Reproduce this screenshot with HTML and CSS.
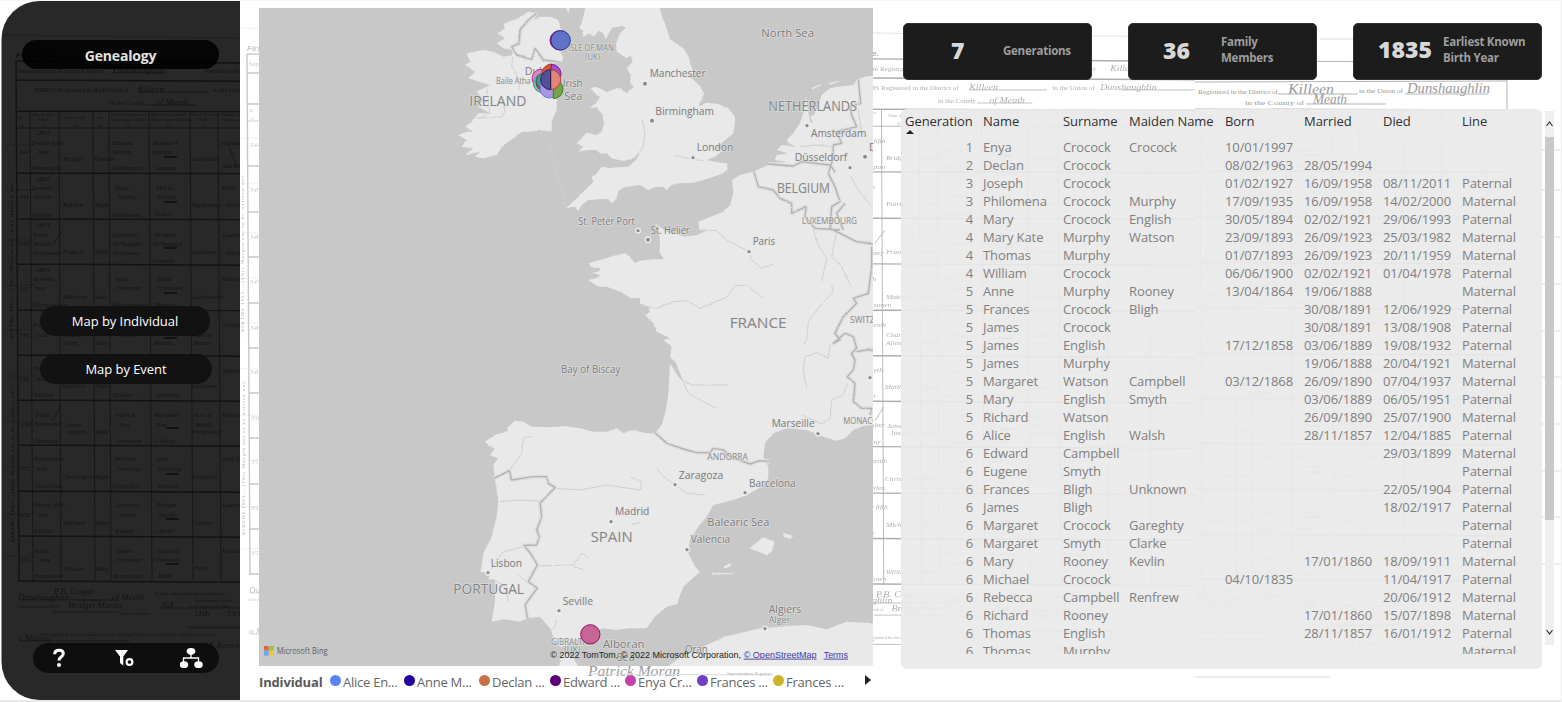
FILE: index.html
```html
<!DOCTYPE html>
<html lang="en">
<head>
<meta charset="utf-8">
<title>Genealogy</title>
<link rel="stylesheet" href="styles.css">
</head>
<body>
<svg class="backdrop" width="1562" height="702" viewBox="0 0 1562 702" aria-hidden="true">
  <defs>
    <clipPath id="clipLeft"><path d="M240 0V702H40A38 38 0 0 1 1 662V40A38 38 0 0 1 40 0Z"/></clipPath>
    <clipPath id="clipMid"><rect x="873" width="322" height="702"/></clipPath>
    <clipPath id="clipRight"><rect x="1195" y="108" width="366" height="594"/></clipPath>
    <clipPath id="clipStrip"><rect x="241" width="18" height="702"/></clipPath>
    <g id="register" fill="currentColor" stroke="none">
      <g stroke="currentColor" fill="none">
        <path stroke-width=".5" opacity=".6" d="M3 35L365 40M5 145H35M5 190H35M5 240H35M5 285H35M5 330H35M5 376H35M5 422H35M5 467H35M5 514H35M5 556H35"/>
        <path stroke-width="1.4" d="M16 61L365 64M16 80L365 82M16 111L365 112M16 173L365 174M16 219L365 220M17 264L365 266M17 310L365 311M18 355L365 357M18 400L365 402M18 445L365 447M18 491L365 493M18 536L365 538M18 581L365 583M16 61L19 581"/>
        <path stroke-width=".8" d="M16 128H365M30 111L33 581M59 111L61 581M93 111L95 581M109 111L111 581M149 111L152 581M190 111L193 581M218 111L221 581M262 112L264 581M300 112L302 581M345 112L347 581"/>
        <path stroke-width=".7" d="M112 73H167M138 92H208M145 105H195M275 92H350M20 600H120M52 612H118M162 608H260M188 627H260M188 628H270M20 641H130M240 642H300"/>
        <path d="M164 157h13M164 202h13M164 248h13M164 293h13M164 338h13M166 383h13M166 428h13M166 474h13M166 519h13M166 564h13" stroke-width="2"/>
        <path d="M53 244L62 231M53 420L61 406M229 145L236 166" stroke-width=".8"/>
      </g>
      <text class="stamp" x="16" y="58">First Page.</text>
      <g class="print">
        <text x="18" y="73">Superintendent Registrar's District</text><text x="205" y="73">Registrar's District</text>
        <text x="35" y="92">BIRTHS Registered in the District of</text><text x="213" y="92">in the Union of</text>
        <text x="110" y="105">in the County</text>
      </g>
      <g class="script heading">
        <text x="113" y="73">Dunshaughlin</text><text x="138" y="92">Killeen</text><text x="156" y="105">of Meath</text><text x="256" y="92">Dunshaughlin</text><text x="265" y="73">Killeen</text>
        <text x="18" y="600">Dunshaughlin</text><text x="54" y="594">P.B. Cogan</text><text x="112" y="600">of Meath</text><text x="68" y="608">Bridget Martin</text><text x="160" y="608">364</text><text x="194" y="616">11th</text><text x="228" y="616">October</text><text x="18" y="641">a Malony</text><text x="205" y="648">M. Kearney</text>
      </g>
      <g class="tiny">
        <text x="18" y="119">No.</text><text x="33" y="116">Date and Place</text><text x="37" y="121">of Birth.</text><text x="65" y="119">Name (if any).</text><text x="97" y="119">Sex.</text><text x="111" y="116">Name and Surname and</text><text x="111" y="121">Dwelling-place of Father.</text><text x="151" y="116">Name and Surname and</text><text x="151" y="121">Maiden Surname of Mother.</text><text x="191" y="116">Rank or Profession</text><text x="196" y="121">of Father.</text><text x="221" y="116">Signature, Qualification,</text><text x="222" y="121">Residence of Informant.</text>
        <text x="19" y="127">(1).</text><text x="41" y="127">(2).</text><text x="73" y="127">(3).</text><text x="97" y="127">(4).</text><text x="126" y="127">(5).</text><text x="166" y="127">(6).</text><text x="201" y="127">(7).</text>
        <text x="155" y="595">Registrar of Births and Deaths in the District of</text><text x="78" y="601">in the County of</text><text x="195" y="602">do hereby certify, that this</text><text x="18" y="608">from the Entry of the Birth of</text><text x="190" y="608">in the Registry of the Births</text><text x="118" y="615">Witness my hand, this</text><text x="40" y="636">I have examined the above, and compared it with the said original Register's Book, and hereby certify that it is a true copy.</text>
      </g>
      <text class="margin" transform="translate(13 339) rotate(-90)" textLength="158">BIRTHS 1863.—(This Margin not to be written on).</text>
      <text class="margin" transform="translate(14 542) rotate(-90)" textLength="155">BIRTHS 1863.—(This Margin not to be written on).</text>
      <g class="script">
        <text x="19" y="154">344</text><text x="36" y="135">1863</text><text x="31" y="145">Twenty fifth</text><text x="37" y="154">June</text><text x="31" y="170">Wilmington</text><text x="63" y="161">Bridget</text><text x="94" y="161">Female</text><text x="112" y="145">Edward</text><text x="112" y="154">Martin</text><text x="112" y="170">Wilmington</text><text x="152" y="145">Margaret</text><text x="152" y="154">Martin</text><text x="154" y="170">Gannon</text><text x="192" y="161">Carpenter</text><text x="220" y="145">Margaret</text><text x="222" y="168">Martin</text>
        <text x="19" y="199">345</text><text x="36" y="181">1863</text><text x="32" y="190">Seventh</text><text x="33" y="199">March</text><text x="32" y="217">Killeen</text><text x="63" y="207">Patrick</text><text x="95" y="207">Male</text><text x="115" y="190">Peter</text><text x="118" y="199">Molloy</text><text x="112" y="217">Kilmessan</text><text x="156" y="190">Maria</text><text x="157" y="199">Molloy</text><text x="155" y="216">Lynch</text><text x="192" y="207">Signalman</text><text x="222" y="190">Peter</text><text x="225" y="207">Molloy</text>
        <text x="19" y="246">346</text><text x="36" y="227">1863</text><text x="33" y="237">South</text><text x="33" y="246">March</text><text x="32" y="255">Mulhussey</text><text x="63" y="254">Francis</text><text x="95" y="254">Male</text><text x="112" y="237">Laurence</text><text x="112" y="246">McTaggart</text><text x="112" y="255">Mulhussey</text><text x="155" y="237">Bridget</text><text x="152" y="246">McTaggart</text><text x="152" y="263">Lawless</text><text x="192" y="254">Labourer</text><text x="222" y="237">Laurence</text><text x="225" y="255">Martin</text>
        <text x="19" y="291">347</text><text x="36" y="272">1863</text><text x="33" y="281">Seventh</text><text x="34" y="290">July</text><text x="32" y="307">Warrenstown</text><text x="63" y="299">Matthew</text><text x="94" y="299">Male</text><text x="114" y="281">John</text><text x="116" y="290">Coleman</text><text x="112" y="307">Warrenstown</text><text x="157" y="281">Eliza</text><text x="158" y="290">Coleman</text><text x="155" y="307">Hughes</text><text x="192" y="299">Landholder</text><text x="221" y="281">Margaret</text>
        <text x="19" y="337">348</text><text x="33" y="327">Fourteenth</text><text x="35" y="337">June</text><text x="63" y="337">Charles</text><text x="63" y="345">Allen</text><text x="95" y="345">Male</text><text x="118" y="327">George</text><text x="118" y="337">Weston</text><text x="154" y="345">Martin</text><text x="193" y="337">Station</text><text x="193" y="345">Master</text><text x="222" y="327">George</text>
        <text x="19" y="381">349</text><text x="34" y="371">Twentieth</text><text x="36" y="381">June</text><text x="34" y="397">Killeen</text><text x="62" y="388">Matthew</text><text x="95" y="388">Male</text><text x="118" y="373">James</text><text x="113" y="397">Killeen</text><text x="156" y="397">Glennon</text><text x="192" y="388">Labourer</text><text x="223" y="373">Mathew</text>
        <text x="20" y="427">350</text><text x="34" y="417">Tenth</text><text x="34" y="426">November</text><text x="34" y="443">Dunsany</text><text x="64" y="427">James</text><text x="67" y="434">Joseph</text><text x="95" y="434">Male</text><text x="115" y="417">Patrick</text><text x="119" y="427">Fox</text><text x="117" y="443">Dunsany</text><text x="154" y="417">Margaret</text><text x="156" y="427">Fox</text><text x="155" y="443">Collins</text><text x="194" y="417">Son of</text><text x="196" y="427">Hotel</text><text x="192" y="434">Proprietor</text><text x="222" y="417">Patrick</text>
        <text x="20" y="471">351</text><text x="34" y="461">Fourteenth</text><text x="36" y="471">July</text><text x="34" y="488">Culmullen</text><text x="62" y="479">Christopher</text><text x="95" y="479">Male</text><text x="115" y="461">William</text><text x="117" y="471">Dowling</text><text x="112" y="488">Culmullen</text><text x="155" y="461">Jane</text><text x="158" y="471">Dowling</text><text x="158" y="488">Bennett</text><text x="193" y="479">Labourer</text><text x="222" y="461">Jane D.</text>
        <text x="20" y="517">352</text><text x="33" y="507">Twenty fifth</text><text x="37" y="517">July</text><text x="34" y="533">Kiltale</text><text x="63" y="525">Michael</text><text x="95" y="525">Male</text><text x="114" y="507">Lawrence</text><text x="119" y="517">Smyth</text><text x="115" y="533">Kiltale</text><text x="156" y="507">Bridget</text><text x="158" y="517">Smyth</text><text x="155" y="533">Clarke</text><text x="194" y="525">Groom</text><text x="222" y="507">Laurence</text>
        <text x="20" y="562">353</text><text x="34" y="553">Tenth</text><text x="38" y="562">June</text><text x="34" y="578">Branstown</text><text x="63" y="571">William</text><text x="95" y="571">Male</text><text x="115" y="553">James</text><text x="116" y="562">Cromwell</text><text x="113" y="578">Branstown</text><text x="157" y="553">Frances</text><text x="153" y="562">Cromwell</text><text x="158" y="578">Bligh</text><text x="194" y="570">Herd</text><text x="222" y="553">Frances</text>
      </g>
    </g>
  </defs>
  <g clip-path="url(#clipStrip)" color="#aaa"><use href="#register" x="231" y="-7" opacity=".65"/></g>
  <g clip-path="url(#clipMid)" color="#8c8c8c"><use href="#register" transform="matrix(1.11 0 0 1.01 816 -3)" opacity=".7"/></g>
  <g clip-path="url(#clipRight)" color="#999"><use href="#register" transform="translate(1141 -2)" opacity=".7"/></g>
  <g fill="#999">
    <g class="print">
      <text x="1198" y="94" textLength="80" lengthAdjust="spacingAndGlyphs">Registered in the District of</text>
      <text x="1359" y="93" textLength="44" lengthAdjust="spacingAndGlyphs">in the Union of</text>
      <text x="1245" y="105" textLength="59" lengthAdjust="spacingAndGlyphs">in the County of</text>
    </g>
    <g class="script large">
      <text x="1288" y="94" textLength="46" lengthAdjust="spacingAndGlyphs">Killeen</text>
      <text x="1407" y="93" textLength="83" lengthAdjust="spacingAndGlyphs">Dunshaughlin</text>
      <text x="1313" y="104" textLength="34" lengthAdjust="spacingAndGlyphs">Meath</text>
      <text x="588" y="676" textLength="92" lengthAdjust="spacingAndGlyphs">Patrick Moran</text>
    </g>
    <path d="M1195 61L1507 62M1195 82L1507 81M1507 62V109M1278 94H1358M1405 94H1488M1306 104H1386" stroke="#b5b5b5" fill="none"/>
    <path d="M1513 150H1562M1513 190H1562M1513 237H1562M1513 284H1562M1513 331H1562M1513 377H1562M1513 424H1562M1513 471H1562M1513 517H1562M1513 564H1562M590 674L773 675M1195 677H1330M1320 39H1353" stroke="#ddd" fill="none"/>
    <g class="tiny"><text x="727" y="675" textLength="45">Superintendent Registrar.</text></g>
  </g>
  <path class="side-fill" d="M240 1V700H40A38 38 0 0 1 1.500 662V39A38 38 0 0 1 40 1Z"/>
  <g clip-path="url(#clipLeft)" color="#0b0b0b"><use href="#register" opacity=".7"/></g>
</svg>

<main class="report">
  <aside class="sidebar">
    <h1 class="pill title">Genealogy</h1>
    <nav class="links">
      <a class="pill link">Map by Individual</a>
      <a class="pill link">Map by Event</a>
    </nav>
    <div class="pill tools">
      <svg width="20" height="22" viewBox="0 0 20 22"><path d="M5.700 7.200Q5.700 3.200 10.100 3.200Q14.300 3.200 14.300 6.500Q14.300 8.500 11.800 10.200Q10 11.500 10 13.500" fill="none" stroke="#fff" stroke-width="3"/><circle cx="10" cy="18" r="2" fill="#fff"/></svg>
      <svg width="22" height="22" viewBox="0 0 22 22"><path d="M1 3H14L9.300 9.500V18.500L6 16V9.500Z" fill="#fff"/><circle cx="15.500" cy="15" r="2.900" fill="#111" stroke="#fff" stroke-width="2.100"/></svg>
      <svg width="24" height="22" viewBox="0 0 24 22"><g fill="#fff"><ellipse cx="11" cy="4.300" rx="4.300" ry="3.400"/><ellipse cx="3.900" cy="17.700" rx="4.300" ry="3.400"/><ellipse cx="18.500" cy="17.700" rx="4.300" ry="3.400"/></g><path d="M11 6V11M3.500 16V11H18.500V16" fill="none" stroke="#fff" stroke-width="1.300"/></svg>
    </div>
  </aside>

  <section class="map-column">
    <div class="map-frame">
    <svg class="map" width="614" height="658" viewBox="-543 24 1842 1974" preserveAspectRatio="none">
      <defs>
        <filter id="coast" x="-5%" y="-5%" width="110%" height="110%"><feTurbulence type="fractalNoise" baseFrequency=".16" numOctaves="2" seed="4"/><feDisplacementMap in="SourceGraphic" scale="6" xChannelSelector="R" yChannelSelector="G"/></filter>
      </defs>
      <rect x="-543" y="24" width="1842" height="1974" fill="#c8c8c8"/>
      <g filter="url(#coast)">
        <g fill="#e9e9e9">
          <path d="M440 10L425 70 417 85 430 92 428 112 450 100 462 110 475 92 490 100 497 118 515 85 545 78 558 82 540 100 528 130 530 155 545 165 560 175 572 165 578 185 560 205 572 225 570 250 582 262 570 270 560 280 545 268 530 264 500 277 485 268 465 260 452 265 470 285 480 290 468 310 448 325 470 322 488 345 492 370 485 395 470 405 440 398 410 430 430 440 415 455 445 450 470 450 480 460 500 460 515 475 550 483 575 478 602 458 585 482 565 500 530 502 510 505 485 500 470 520 455 530 460 545 430 575 405 600 378 625 390 622 405 620 415 633 425 615 445 600 480 597 505 598 515 610 530 595 535 572 555 562 600 555 625 570 645 562 670 560 680 570 695 555 720 550 760 548 790 540 820 530 845 522 862 510 862 490 830 487 800 480 825 470 850 450 828 445 850 425 880 400 885 370 885 350 865 325 835 312 800 308 775 320 785 300 792 280 780 258 750 230 735 220 765 230 750 190 750 178 730 145 690 118 680 85 665 45 655 10Z"/>
          <path d="M170 130L195 115 172 100 195 85 190 75 205 65 235 55 265 35 290 40 283 60 300 50 330 50 355 60 362 85 370 100 393 125 378 140 360 150 370 175 365 185 345 180 320 195 340 210 355 230 355 260 350 300 350 330 335 365 335 395 300 390 275 395 245 395 225 412 205 425 185 440 170 465 130 475 105 470 120 455 75 465 100 445 65 440 80 420 55 405 80 395 100 395 75 380 95 365 115 340 150 340 115 320 130 300 110 275 150 255 85 235 105 215 75 195 90 185 80 160 105 155 130 150 160 155 190 170 215 165 220 150 190 145Z"/>
          <path d="M1310 225L1275 230 1252 238 1240 255 1195 260 1170 265 1145 285 1138 310 1122 345 1110 350 1120 370 1110 365 1100 310 1098 290 1090 340 1080 370 1060 400 1040 420 1045 430 1070 440 1025 435 1010 450 1045 460 1010 465 1005 480 1040 485 1000 490 985 495 940 515 900 525 877 540 880 580 870 615 850 635 775 665 778 690 800 692 770 705 735 710 700 700 680 695 645 670 655 690 660 720 658 755 672 778 640 778 600 782 585 790 570 770 555 760 530 765 480 780 445 790 455 802 480 804 478 815 455 818 480 825 475 832 445 840 475 860 500 860 540 875 575 895 600 895 600 910 625 920 630 935 615 945 640 970 650 995 690 1015 670 1020 695 1040 690 1070 708 1088 722 1125 728 1144 715 1130 690 1090 685 1180 678 1230 665 1275 645 1300 620 1300 575 1290 550 1300 530 1285 500 1295 460 1295 420 1285 370 1278 330 1282 275 1280 250 1265 225 1262 200 1285 205 1292 165 1305 135 1325 148 1340 165 1345 150 1365 175 1375 160 1395 165 1440 175 1500 170 1550 155 1610 130 1660 122 1715 148 1720 145 1738 165 1738 165 1805 155 1865 190 1858 240 1865 262 1855 300 1850 330 1885 345 1925 365 1942 390 1925 430 1910 450 1900 490 1885 530 1890 565 1885 620 1885 645 1850 680 1820 712 1812 715 1800 730 1760 780 1715 765 1700 745 1660 750 1620 775 1580 800 1550 820 1515 880 1500 920 1485 965 1460 985 1435 985 1400 970 1370 975 1330 1000 1300 1040 1285 1100 1290 1150 1310 1190 1322 1215 1315 1240 1290 1270 1278 1310 1275Z"/>
          <path d="M355 2010L365 1960 385 1965 400 1975 422 2010ZM680 2010L685 1998 710 1980 730 1965 760 1955 800 1935 860 1908 900 1900 960 1885 1050 1878 1100 1875 1160 1888 1220 1865 1310 1870 1310 2010Z"/>
          <path d="M928 1645L970 1612 1003 1625 995 1655 980 1665 955 1655ZM1030 1598L1060 1608 1050 1617 1030 1610ZM850 1700L875 1688 870 1700 855 1705ZM815 1718L880 1720V1723H815ZM378 24L392 10 385 40ZM1115 264L1140 253 1145 255 1118 268ZM1168 250L1195 242 1195 246 1170 254Z"/>
        </g>
        <g fill="none" stroke="#d0d0d0" stroke-width="3">
          <path d="M607 360L615 400 610 440 580 480M705 466L740 475 790 482M218 170L215 200 230 225 240 270M140 265L150 340 115 355M190 310L195 335 185 350 110 355M780 690L830 692 860 720 927 755 935 780 965 805 1000 792M600 915L650 925 700 905 740 902 780 925 860 892 885 857 920 855 970 895M1118 682L1135 735 1160 775 1145 845M1190 695L1175 770 1205 800 1232 857M1175 855L1180 875 1130 930 1105 965 1100 1020 1092 1032M1170 1035L1165 1075 1130 1058 1095 1070 1090 1110 1100 1165M725 1140L755 1155 865 1155M730 1148L745 1180 790 1205 830 1225M1222 1150L1210 1185 1175 1200 1170 1255 1145 1272 1085 1245M275 1310L250 1312 245 1360 210 1410M345 1465L420 1470 500 1455 600 1470 605 1445 570 1430M650 1405L670 1430 740 1480 795 1485M180 1505L240 1500 300 1503M290 1698L400 1695 425 1660 450 1675M400 1700L430 1708M575 1573L600 1568M350 1860L345 1880 333 1890M145 1720L190 1655 250 1640M165 1740L200 1765 205 1805M230 1720L265 1750M1080 440L1130 435 1180 440M1255 330L1265 400M1230 525L1255 570 1299 625"/>
        </g>
        <g class="border-glow" fill="none" stroke-linejoin="round"><use href="#borders"/></g>
        <g class="border-line" fill="none" stroke-linejoin="round"><path id="borders" d="M290 40L265 60 240 90 238 130 215 140 230 165 275 178 285 145 310 180 350 185M985 492L1060 498 1085 485 1170 495 1185 515M942 515L955 560 1000 570 1020 595 1055 610 1055 640 1098 620 1095 650 1125 685 1200 690M1255 238L1262 310 1230 320 1235 345 1250 380 1190 395 1205 430 1180 435 1178 480 1165 520 1185 560 1200 605 1175 620 1170 685 1220 710 1250 725 1299 732M1215 610L1190 640 1210 690M1295 740L1295 800 1285 880 1240 895 1250 910 1210 950 1195 980 1185 1000 1200 1020 1180 1030 1215 1000 1240 1010 1250 1045 1235 1060 1245 1080 1240 1110 1222 1130 1245 1150 1240 1205 1265 1225 1295 1225 1290 1245M1250 1055L1290 1048 1299 1052M645 1298L680 1330 740 1350 770 1358 810 1358 820 1345 850 1350 870 1370 930 1392 960 1382 988 1384M162 1435L208 1412 215 1440 280 1430 320 1430 325 1450 345 1463 300 1510 305 1550 290 1590 298 1610 290 1635 252 1636 275 1665 292 1695 265 1745 292 1765 280 1780 255 1815 263 1855"/></g>
        <path d="M330 435L375 615" stroke="#d5d5d5" stroke-width="2" stroke-dasharray="14 8"/>
      </g>
      <g class="dots"><circle cx="615" cy="251" r="8"/><circle cx="636" cy="362" r="8"/><circle cx="759" cy="473" r="7"/><circle cx="1101" cy="377" r="7"/><circle cx="1275" cy="470" r="8"/><circle cx="1230" cy="503" r="7"/><circle cx="594" cy="692" r="7"/><circle cx="624" cy="719" r="8"/><circle cx="927" cy="755" r="7"/><circle cx="1290" cy="1133" r="7"/><circle cx="1134" cy="1301" r="7"/><circle cx="705" cy="1454" r="7"/><circle cx="915" cy="1478" r="7"/><circle cx="513" cy="1565" r="7"/><circle cx="741" cy="1649" r="7"/><circle cx="144" cy="1718" r="7"/><circle cx="357" cy="1832" r="7"/><circle cx="975" cy="1886" r="7"/></g>
      <g class="labels">
        <text x="964" y="112" textLength="158" lengthAdjust="spacingAndGlyphs">North Sea</text>
        <text x="384" y="154" class="s" textLength="137" lengthAdjust="spacingAndGlyphs">ISLE OF MAN</text>
        <text x="436" y="180" class="s" textLength="44" lengthAdjust="spacingAndGlyphs">(UK)</text>
        <text x="254" y="226" class="m">Dublin</text>
        <text x="168" y="251" class="s" textLength="104" lengthAdjust="spacingAndGlyphs">Baile Atha</text>
        <text x="368" y="261" textLength="60" lengthAdjust="spacingAndGlyphs">Irish</text>
        <text x="373" y="300" textLength="54" lengthAdjust="spacingAndGlyphs">Sea</text>
        <text x="88" y="318" class="l" textLength="171" lengthAdjust="spacingAndGlyphs">IRELAND</text>
        <text x="629" y="230" textLength="168" lengthAdjust="spacingAndGlyphs">Manchester</text>
        <text x="646" y="344" textLength="176" lengthAdjust="spacingAndGlyphs">Birmingham</text>
        <text x="770" y="454" textLength="110" lengthAdjust="spacingAndGlyphs">London</text>
        <text x="985" y="332" class="l" textLength="266" lengthAdjust="spacingAndGlyphs">NETHERLANDS</text>
        <text x="1113" y="410" textLength="166" lengthAdjust="spacingAndGlyphs">Amsterdam</text>
        <text x="1287" y="452">D</text>
        <text x="1064" y="483" textLength="158" lengthAdjust="spacingAndGlyphs">Düsseldorf</text>
        <text x="1011" y="578" class="l" textLength="159" lengthAdjust="spacingAndGlyphs">BELGIUM</text>
        <text x="1085" y="671" class="s" textLength="166" lengthAdjust="spacingAndGlyphs">LUXEMBOURG</text>
        <text x="415" y="676" class="m" textLength="169" lengthAdjust="spacingAndGlyphs">St. Peter Port</text>
        <text x="632" y="701" class="m" textLength="117" lengthAdjust="spacingAndGlyphs">St. Helier</text>
        <text x="938" y="736" textLength="68" lengthAdjust="spacingAndGlyphs">Paris</text>
        <text x="869" y="984" class="l" textLength="171" lengthAdjust="spacingAndGlyphs">FRANCE</text>
        <text x="1230" y="969" class="s" textLength="117" lengthAdjust="spacingAndGlyphs">SWITZERL</text>
        <text x="363" y="1119" textLength="178" lengthAdjust="spacingAndGlyphs">Bay of Biscay</text>
        <text x="995" y="1282" textLength="129" lengthAdjust="spacingAndGlyphs">Marseille</text>
        <text x="1210" y="1272" class="s" textLength="105" lengthAdjust="spacingAndGlyphs">MONACO</text>
        <text x="802" y="1379" class="s" textLength="122" lengthAdjust="spacingAndGlyphs">ANDORRA</text>
        <text x="716" y="1438" textLength="134" lengthAdjust="spacingAndGlyphs">Zaragoza</text>
        <text x="927" y="1462" textLength="140" lengthAdjust="spacingAndGlyphs">Barcelona</text>
        <text x="525" y="1546" textLength="103" lengthAdjust="spacingAndGlyphs">Madrid</text>
        <text x="452" y="1626" class="l" textLength="126" lengthAdjust="spacingAndGlyphs">SPAIN</text>
        <text x="802" y="1578" textLength="186" lengthAdjust="spacingAndGlyphs">Balearic Sea</text>
        <text x="752" y="1630" textLength="119" lengthAdjust="spacingAndGlyphs">Valencia</text>
        <text x="152" y="1702" textLength="94" lengthAdjust="spacingAndGlyphs">Lisbon</text>
        <text x="40" y="1782" class="l" textLength="212" lengthAdjust="spacingAndGlyphs">PORTUGAL</text>
        <text x="368" y="1816" textLength="91" lengthAdjust="spacingAndGlyphs">Seville</text>
        <text x="986" y="1840" textLength="98" lengthAdjust="spacingAndGlyphs">Algiers</text>
        <text x="986" y="1870" class="s alt" textLength="65" lengthAdjust="spacingAndGlyphs">Alger</text>
        <text x="333" y="1935" class="s" textLength="125" lengthAdjust="spacingAndGlyphs">GIBRALTAR</text>
        <text x="373" y="1958" class="s" textLength="48" lengthAdjust="spacingAndGlyphs">(UK)</text>
        <text x="489" y="1944" textLength="124" lengthAdjust="spacingAndGlyphs">Alboran</text>
        <text x="530" y="1982" textLength="54" lengthAdjust="spacingAndGlyphs">Sea</text>
        <text x="735" y="1958" textLength="68" lengthAdjust="spacingAndGlyphs">Oran</text>
      </g>
      <g stroke-width="3">
        <circle cx="359" cy="121" r="29" fill="#8f4ba3" stroke="#8b0d7c"/>
        <circle cx="362" cy="121" r="29" fill="#6271c9" stroke="#233b98"/>
        <circle cx="303" cy="235" r="27" fill="#d88bc3" stroke="#c22a91"/>
        <circle cx="308" cy="250" r="28" fill="#7fb7a8" stroke="#24a883"/>
        <circle cx="316" cy="246" r="28" fill="#b9434d" stroke="#9c2028"/>
        <circle cx="313" cy="243" r="24" fill="#568f91" stroke="#256c73"/>
        <path d="M334 193A29 29 0 0 0 334 251Z" fill="#cf573a" stroke="#c13117"/>
        <path d="M334 193A29 29 0 0 1 334 251Z" fill="#a44dc4" stroke="#8117a8"/>
        <circle cx="328" cy="266" r="28" fill="#a996db" stroke="#6572e9"/>
        <path d="M340 238A29 29 0 0 1 340 296Z" fill="#76a349" stroke="#38831a"/>
        <path d="M332 209A30 30 0 0 0 332 269Z" fill="#554f98" stroke="#172579"/>
        <path d="M332 209A30 30 0 0 1 332 269Z" fill="#e18576" stroke="#b83c2c"/>
        <path d="M332 209V269" stroke="#26205d"/>
        <circle cx="451" cy="1903" r="29" fill="#c96497" stroke="#8e1762"/>
      </g>
      <g><path d="M-528 1938h14v14h-14z" fill="#d16d43"/><path d="M-513 1938h14v14h-14z" fill="#9dc23e"/><path d="M-528 1953h14v14h-14z" fill="#70a7e8"/><path d="M-513 1953h14v14h-14z" fill="#edc83c"/>
      <text class="bing" x="-490" y="1963" textLength="153" lengthAdjust="spacingAndGlyphs">Microsoft Bing</text></g>
      <text class="credit" x="331" y="1973" textLength="572" lengthAdjust="spacingAndGlyphs">© 2022 TomTom, © 2022 Microsoft Corporation,</text>
      <text class="credit linked" x="911" y="1973" textLength="219" lengthAdjust="spacingAndGlyphs">© OpenStreetMap</text>
      <text class="credit linked" x="1151" y="1973" textLength="73" lengthAdjust="spacingAndGlyphs">Terms</text>
    </svg>
    </div>
    <div class="legend">
      <strong>Individual</strong>
      <span class="key blue">Alice En...</span><span class="key navy">Anne M...</span><span class="key orange">Declan ...</span><span class="key purple">Edward ...</span><span class="key pink">Enya Cr...</span><span class="key violet">Frances ...</span><span class="key gold">Frances ...</span>
      <i class="next"></i>
    </div>
  </section>

  <section class="details">
    <div class="cards">
      <div class="card generations"><b>7</b><span>Generations</span></div>
      <div class="card members"><b>36</b><span>Family<br>Members</span></div>
      <div class="card earliest"><b>1835</b><span>Earliest Known<br>Birth Year</span></div>
    </div>
    <div class="table-area">
      <div class="panel">
        <div class="viewport">
        <table>
          <colgroup><col class="c-gen"><col class="c-name"><col class="c-sur"><col class="c-maid"><col class="c-date"><col class="c-date"><col class="c-date"><col class="c-line"></colgroup>
          <thead><tr><th class="sorted">Generation<th>Name<th>Surname<th>Maiden Name<th>Born<th>Married<th>Died<th>Line</tr></thead>
          <tbody>
<tr><td>1<td>Enya<td>Crocock<td>Crocock<td>10/01/1997<td><td><td></tr>
<tr><td>2<td>Declan<td>Crocock<td><td>08/02/1963<td>28/05/1994<td><td></tr>
<tr><td>3<td>Joseph<td>Crocock<td><td>01/02/1927<td>16/09/1958<td>08/11/2011<td>Paternal</tr>
<tr><td>3<td>Philomena<td>Crocock<td>Murphy<td>17/09/1935<td>16/09/1958<td>14/02/2000<td>Maternal</tr>
<tr><td>4<td>Mary<td>Crocock<td>English<td>30/05/1894<td>02/02/1921<td>29/06/1993<td>Paternal</tr>
<tr><td>4<td>Mary Kate<td>Murphy<td>Watson<td>23/09/1893<td>26/09/1923<td>25/03/1982<td>Maternal</tr>
<tr><td>4<td>Thomas<td>Murphy<td><td>01/07/1893<td>26/09/1923<td>20/11/1959<td>Maternal</tr>
<tr><td>4<td>William<td>Crocock<td><td>06/06/1900<td>02/02/1921<td>01/04/1978<td>Paternal</tr>
<tr><td>5<td>Anne<td>Murphy<td>Rooney<td>13/04/1864<td>19/06/1888<td><td>Maternal</tr>
<tr><td>5<td>Frances<td>Crocock<td>Bligh<td><td>30/08/1891<td>12/06/1929<td>Paternal</tr>
<tr><td>5<td>James<td>Crocock<td><td><td>30/08/1891<td>13/08/1908<td>Paternal</tr>
<tr><td>5<td>James<td>English<td><td>17/12/1858<td>03/06/1889<td>19/08/1932<td>Paternal</tr>
<tr><td>5<td>James<td>Murphy<td><td><td>19/06/1888<td>20/04/1921<td>Maternal</tr>
<tr><td>5<td>Margaret<td>Watson<td>Campbell<td>03/12/1868<td>26/09/1890<td>07/04/1937<td>Maternal</tr>
<tr><td>5<td>Mary<td>English<td>Smyth<td><td>03/06/1889<td>06/05/1951<td>Paternal</tr>
<tr><td>5<td>Richard<td>Watson<td><td><td>26/09/1890<td>25/07/1900<td>Maternal</tr>
<tr><td>6<td>Alice<td>English<td>Walsh<td><td>28/11/1857<td>12/04/1885<td>Paternal</tr>
<tr><td>6<td>Edward<td>Campbell<td><td><td><td>29/03/1899<td>Maternal</tr>
<tr><td>6<td>Eugene<td>Smyth<td><td><td><td><td>Paternal</tr>
<tr><td>6<td>Frances<td>Bligh<td>Unknown<td><td><td>22/05/1904<td>Paternal</tr>
<tr><td>6<td>James<td>Bligh<td><td><td><td>18/02/1917<td>Paternal</tr>
<tr><td>6<td>Margaret<td>Crocock<td>Gareghty<td><td><td><td>Paternal</tr>
<tr><td>6<td>Margaret<td>Smyth<td>Clarke<td><td><td><td>Paternal</tr>
<tr><td>6<td>Mary<td>Rooney<td>Kevlin<td><td>17/01/1860<td>18/09/1911<td>Maternal</tr>
<tr><td>6<td>Michael<td>Crocock<td><td>04/10/1835<td><td>11/04/1917<td>Paternal</tr>
<tr><td>6<td>Rebecca<td>Campbell<td>Renfrew<td><td><td>20/06/1912<td>Maternal</tr>
<tr><td>6<td>Richard<td>Rooney<td><td><td>17/01/1860<td>15/07/1898<td>Maternal</tr>
<tr><td>6<td>Thomas<td>English<td><td><td>28/11/1857<td>16/01/1912<td>Paternal</tr>
<tr><td>6<td>Thomas<td>Murphy<td><td><td><td><td>Maternal</tr>
          </tbody>
        </table>
        </div>
      </div>
      <div class="scrollbar">
        <svg width="9" height="26" viewBox="0 0 9 26"><path d="M1.500 15L4.500 11 7.500 15" fill="none" stroke="#333" stroke-width="1.200"/></svg>
        <div class="track"><div class="thumb"></div></div>
        <svg width="9" height="26" viewBox="0 0 9 26"><path d="M1.500 11L4.500 15 7.500 11" fill="none" stroke="#333" stroke-width="1.200"/></svg>
      </div>
    </div>
  </section>
</main>
</body>
</html>
```

FILE: styles.css
```css
* { box-sizing: border-box; }
body {
  margin: 0;
  width: 1562px;
  height: 702px;
  overflow: hidden;
  background: #fff;
  font-family: "Open Sans", "Noto Sans", sans-serif;
  color: #666;
}

/* Scanned register behind the report */
.backdrop { position: absolute; inset: 0; z-index: -1; }
.side-fill { fill: #282828; }
.print { font: 6.3px "Liberation Serif", serif; }
.script { font: italic 6.8px "Liberation Serif", serif; }
.heading { font-size: 9px; }
.large { font-size: 15px; }
.tiny { font: 3.6px "Liberation Serif", serif; }
.stamp { font: italic bold 8px "Liberation Sans", sans-serif; }
.margin { font: bold 5px "Liberation Serif", serif; }

.report {
  display: flex;
  height: 702px;
  border-top: 1px solid #f5f5f5;
  border-right: 1px solid #eee;
  border-bottom: 2px solid #e9e9e9;
}

/* Sidebar */
.sidebar {
  flex: none;
  width: 240px;
  display: flex;
  flex-direction: column;
  padding: 39px 0 27px;
}
.pill {
  display: flex;
  align-items: center;
  justify-content: center;
  border-radius: 15px;
  background: rgba(17, 17, 17, .93);
  color: #fff;
}
.title {
  width: 197px;
  height: 29px;
  margin: 0 0 237px 22px;
  padding-top: 2px;
  background: rgba(0, 0, 0, .88);
  color: #e2e2e2;
  font-size: 14px;
  font-weight: 700;
  letter-spacing: -.2px;
}
.links { display: flex; flex-direction: column; gap: 18px; margin-left: 40px; }
.link { width: 170px; height: 30px; font-size: 13px; letter-spacing: -.05px; }
.link + .link { width: 172px; }
.tools {
  width: 186px;
  height: 30px;
  margin: auto 0 0 33px;
  padding: 0 15px 0 16px;
  justify-content: space-between;
  background: #0e0e0e;
}

/* Map */
.map-column { flex: none; width: 614px; margin-left: 19px; padding-top: 7px; }
.map-frame { height: 658px; }
.map { display: block; }
.map text { font-family: "Open Sans", "Noto Sans", sans-serif; }
.border-line { stroke: #b3b3b3; stroke-width: 4; }
.border-glow { stroke: #dedede; stroke-width: 12; }
.dots { fill: #8b8b8b; stroke: #efefef; stroke-width: 4; }
.labels { font-size: 34px; fill: #7c7c7c; stroke: #e5e5e5; stroke-opacity: .6; stroke-width: 5; paint-order: stroke; }
.labels .s { font-size: 26px; fill: #8b8b8b; }
.labels .m { font-size: 32px; }
.labels .l { font-size: 45px; fill: #858585; }
.labels .alt { font-size: 29px; }
.bing { font-size: 25px; fill: #606060; }
.map .credit { font-family: "Liberation Sans", sans-serif; font-size: 27px; fill: #222; }
.map .linked { fill: #3e3aa2; text-decoration: underline; }

.legend {
  display: flex;
  align-items: center;
  height: 31px;
  white-space: nowrap;
  font-size: 13px;
  letter-spacing: -.25px;
}
.legend strong { width: 71px; color: #595959; letter-spacing: -.15px; }
.key { display: flex; align-items: center; gap: 2px; }
.key::before { content: ""; flex: none; width: 11px; height: 11px; margin-top: -2px; border-radius: 50%; background: var(--dot); }
.blue { --dot: #5c82fa; width: 74px; }
.navy { --dot: #2500a0; width: 75px; }
.orange { --dot: #cb7043; width: 71px; }
.purple { --dot: #5d0078; width: 75px; }
.pink { --dot: #c83fa5; width: 72px; }
.violet { --dot: #6f3fc4; width: 76px; }
.gold { --dot: #cbb42c; width: 92px; }
.next { margin-top: -3px; border: 5px solid transparent; border-left: 6px solid #222; border-right: 0; }

/* Details */
.details { flex: none; width: 688px; padding: 22px 0 0 28px; }
.cards { display: flex; gap: 36px; margin-left: 2px; }
.card {
  flex: none;
  width: 189px;
  height: 57px;
  border: 1px solid #303030;
  border-radius: 5px;
  background: rgba(23, 23, 23, .98);
  color: #9e9e9e;
  display: flex;
  align-items: center;
  font-size: 11.500px;
  font-weight: 700;
  line-height: 16px;
  letter-spacing: -.25px;
}
.card b { color: #d8d8d8; font-size: 23px; line-height: 30px; letter-spacing: 0; }
.card span { white-space: nowrap; }
.generations b { width: 52px; margin-left: 47px; margin-top: -3px; }
.members b { width: 58px; margin-left: 34px; margin-top: -3px; }
.earliest b { width: 65px; margin-left: 24px; margin-top: -6px; }
.generations span { margin-top: -2px; }
.members span, .earliest span { margin-top: -3px; }

.table-area { display: flex; gap: 3px; margin-top: 29px; }
.panel { flex: none; width: 641px; height: 560px; border-radius: 6px; background: rgba(233, 233, 233, .92); }
.viewport { height: 545px; overflow: hidden; }
table { width: 625px; border-collapse: collapse; table-layout: fixed; font-size: 13px; letter-spacing: -.1px; }
.c-gen { width: 72px; }
.c-name { width: 80px; }
.c-sur { width: 66px; }
.c-maid { width: 96px; }
.c-date { width: 79px; }
.c-line { width: 74px; }
th, td { padding: 0 0 0 10px; text-align: left; white-space: nowrap; }
th { height: 29px; padding-top: 3px; vertical-align: top; line-height: 18px; font-weight: 500; letter-spacing: -.05px; color: #303030; }
td { height: 18px; line-height: 18px; color: #808080; }
th:first-child, td:first-child { padding-left: 4px; text-align: right; }
th:first-child { text-align: left; }
.sorted::after {
  content: "";
  display: block;
  width: 0;
  margin: 0 0 0 1px;
  border: 4px solid transparent;
  border-top: 0;
  border-bottom-color: #222;
}
.scrollbar { flex: none; display: flex; flex-direction: column; width: 9px; height: 534px; margin-top: 2px; background: #efefef; }
.track { flex: 1; }
.thumb { height: 383px; background: #c8c8c8; }
```
